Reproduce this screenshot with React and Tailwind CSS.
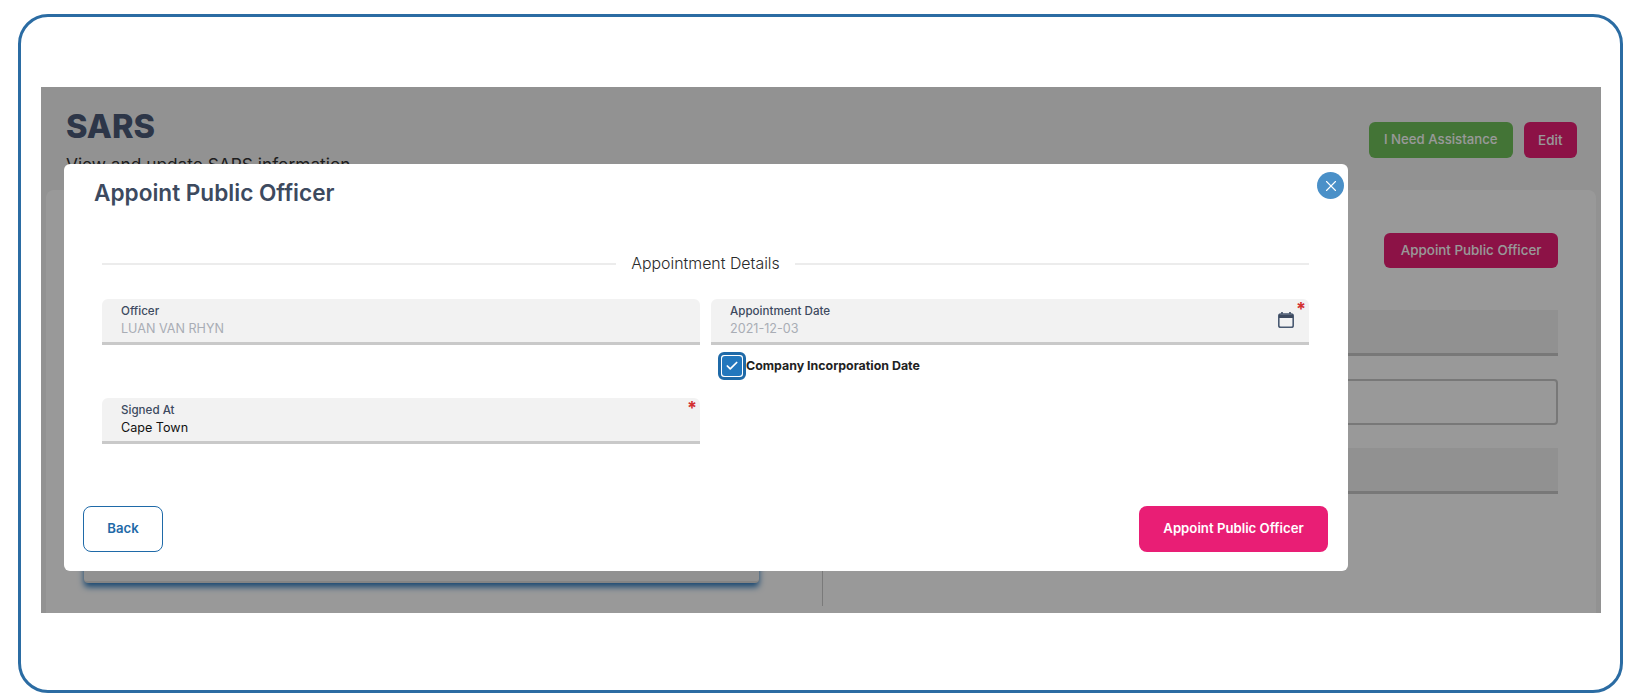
import React from 'react'
import { FiX, FiCheck } from 'react-icons/fi'

const CalendarIcon = () => (
    <svg width="18" height="18" viewBox="0 0 18 18" fill="none">
        <path d="M5 1v3M13 1v3" stroke="#3d4a5f" strokeWidth="1.6" />
        <rect x="1.8" y="3" width="14.4" height="13.2" rx="1.8" stroke="#4a5a72" strokeWidth="1.6" fill="#f2f2f2" />
        <path d="M2 3.6h14v3.4H2z" fill="#3d4a5f" />
    </svg>
)

const Field = ({ label, value, muted, required, icon }) => (
    <div className="relative h-[46px] rounded-t-md bg-[#f2f2f2] border-b-[3px] border-[#c9c9c9] pl-[19px] pt-[5px]">
        <div className="text-[11.6px] leading-[15px] font-medium text-[#3d4a5f]">{label}</div>
        <div className={`text-[12.6px] leading-[18px] mt-[0.5px] ${muted ? 'text-[#a9adb5]' : 'text-[#111]'}`}>{value}</div>
        {icon && <div className="absolute right-[14px] top-[12px]">{icon}</div>}
        {required && <span className="absolute right-[3px] top-[1px] text-[18px] leading-[18px] font-bold text-[#d32f2f]">*</span>}
    </div>
)

const Background = () => (
    <div className="h-full bg-[#f4f4f4]">
        <div className="flex justify-between pl-[25px] pr-[24px] pt-[19px] h-[103px]">
            <div>
                <h1 className="text-[32.6px] leading-[40px] font-extrabold text-[#4b5a78]">SARS</h1>
                <p className="text-[17.3px] leading-[24px] mt-[7px] text-[#333]">View and update SARS information</p>
            </div>
            <div className="flex gap-[11px] h-[36px] mt-[16px]">
                <div className="flex items-center rounded-md bg-[#71c25a] px-[15px] text-[13.2px] font-medium text-white">I Need Assistance</div>
                <div className="flex items-center rounded-md bg-[#e91e75] px-[14.5px] text-[13.5px] font-medium text-white">Edit</div>
            </div>
        </div>
        <div className="ml-[5px] mr-[5px] h-[423px] rounded-t-lg bg-white flex">
            <div className="w-[776px] pl-[38px] pr-[63px] flex flex-col justify-end pb-[30px]">
                <div className="h-[40px] rounded-b bg-[#f2f2f2] border-b-2 border-[#dcdcdc] shadow-[0_4px_6px_#2b78bd]" />
            </div>
            <div className="flex-1 border-l border-[#ccc] mb-[7px] pl-[20px] pr-[38px] pt-[43px] flex flex-col items-end">
                <div className="flex items-center h-[35px] rounded-md bg-[#e91e75] px-[16.5px] text-[13.4px] font-medium text-white">Appoint Public Officer</div>
                <div className="mt-[42px] w-full h-[46px] bg-[#f2f2f2] border-b-[3px] border-[#c9c9c9]" />
                <div className="mt-[23px] w-full h-[46px] rounded border-2 border-[#c9c9c9]" />
                <div className="mt-[23px] w-full h-[46px] bg-[#f2f2f2] border-b-[3px] border-[#c9c9c9]" />
            </div>
        </div>
    </div>
)

const Modal = () => (
    <div className="absolute left-[23px] top-[77px] w-[1284px] h-[407px] rounded-md bg-white">
        <button className="absolute right-[4px] top-[8px] w-[27px] h-[27px] rounded-full bg-[#4a90c8] flex items-center justify-center text-white">
            <FiX className="w-[18px] h-[18px]" strokeWidth={1.5} />
        </button>
        <h2 className="pl-[30px] pt-[13px] text-[22.6px] leading-[32px] font-semibold text-[#3d4a5f]">Appoint Public Officer</h2>
        <div className="ml-[38px] mr-[39px] mt-[43px] flex items-center gap-[15px]">
            <div className="flex-1 h-[2px] bg-[#ececec]" />
            <span className="text-[15.9px] leading-[24px] font-light text-[#2a2a2a]">Appointment Details</span>
            <div className="flex-1 h-[2px] bg-[#ececec]" />
        </div>
        <div className="ml-[38px] mr-[39px] mt-[23px] grid grid-cols-2 gap-x-[11px]">
            <Field label="Officer" value="LUAN VAN RHYN" muted />
            <div>
                <Field label="Appointment Date" value="2021-12-03" muted required icon={<CalendarIcon />} />
                <label className="mt-[7px] ml-[7px] flex items-center h-[28px]">
                    <span className="w-[28px] h-[28px] rounded-md border-[3px] border-[#1f6aa8] flex items-center justify-center">
                        <span className="w-[20px] h-[20px] rounded-[3px] bg-[#2277bd] flex items-center justify-center text-white">
                            <FiCheck className="w-[14px] h-[14px]" strokeWidth={3} />
                        </span>
                    </span>
                    <span className="text-[12.4px] font-bold text-[#222]">Company Incorporation Date</span>
                </label>
            </div>
            <div className="mt-[18px] col-start-1 row-start-2">
                <Field label="Signed At" value="Cape Town" required />
            </div>
        </div>
        <div className="absolute left-[19px] right-[20px] bottom-[19px] flex justify-between">
            <button className="w-[80px] h-[46px] rounded-lg border border-[#1f6aa8] text-[13.2px] font-semibold text-[#1f6aa8]">Back</button>
            <button className="w-[189px] h-[46px] rounded-lg bg-[#e91e75] text-[13.2px] font-semibold text-white">Appoint Public Officer</button>
        </div>
    </div>
)

export default function App() {
    return (
        <div className="w-[1640px] h-[700px] bg-white pl-[18px] pt-[14px] font-['Inter',sans-serif]">
            <div className="w-[1605px] h-[679px] rounded-[30px] border-[3px] border-[#2b6ca3] pl-[20px] pt-[70px]">
                <div className="relative w-[1560px] h-[526px] overflow-hidden">
                    <Background />
                    <div className="absolute inset-0 bg-black/40" />
                    <Modal />
                </div>
            </div>
        </div>
    )
}
